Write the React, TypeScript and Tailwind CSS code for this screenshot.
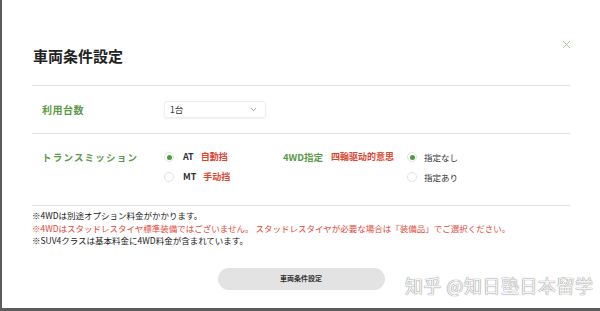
import { ChevronDown, X } from 'lucide-react';

const FONT = '"Noto Sans CJK JP", "Noto Sans", sans-serif';

function Radio({ checked }: { checked: boolean }) {
  return (
    <span className="w-[10px] h-[10px] rounded-full border border-[#e3e3e3] bg-white flex items-center justify-center shrink-0">
      {checked && <span className="w-[5px] h-[5px] rounded-full bg-[#4f9a42]" />}
    </span>
  );
}

export default function App() {
  return (
    <div
      className="relative w-[600px] h-[311px] bg-white border-l-2 border-[#5c5c5c] overflow-hidden flex flex-col"
      style={{ fontFamily: FONT }}
    >
      <div className="flex-1 px-[30px]">
        {/* header */}
        <div className="flex items-start justify-between pt-[46px] pb-[20px] border-b border-[#e2e2e2]">
          <h1 className="text-[15px] leading-[19px] font-bold text-[#222] pl-[1px]">車両条件設定</h1>
          <X className="w-[13px] h-[13px] text-[#8fb38b] -mt-[8px] -mr-[3px]" strokeWidth={1.4} />
        </div>

        {/* vehicle count */}
        <div className="flex items-center h-[48px] border-b border-[#e2e2e2] pl-[10px]">
          <span className="w-[122px] text-[10px] font-bold text-[#5b9a48] tracking-[0.5px]">利用台数</span>
          <div className="w-[102px] h-[17px] rounded-[3px] border border-[#efefef] shadow-[0_1px_2px_rgba(0,0,0,0.06)] flex items-center justify-between pl-[5px] pr-[7px]">
            <span className="text-[8.5px] text-[#333]">1台</span>
            <ChevronDown className="w-[9px] h-[9px] text-[#777]" strokeWidth={2} />
          </div>
        </div>

        {/* transmission / 4wd */}
        <div className="flex items-start h-[72px] border-b border-[#e2e2e2] pl-[10px] pt-[17px]">
          <span className="w-[122px] text-[9.5px] leading-[12px] font-bold text-[#5b9a48] tracking-[1.2px]">トランスミッション</span>
          <div className="w-[119px] flex flex-col gap-[8px]">
            <div className="flex items-center h-[12px]">
              <Radio checked />
              <span className="ml-[9px] text-[9px] font-bold text-[#333]">AT</span>
              <span className="ml-[7px] text-[9px] font-bold text-[#e0442e]">自動挡</span>
            </div>
            <div className="flex items-center h-[12px]">
              <Radio checked={false} />
              <span className="ml-[9px] text-[9px] font-bold text-[#333]">MT</span>
              <span className="ml-[7px] text-[9px] font-bold text-[#e0442e]">手动挡</span>
            </div>
          </div>
          <div className="flex items-center h-[12px] w-[124px]">
            <span className="text-[9.5px] font-bold text-[#5b9a48]">4WD指定</span>
            <span className="ml-[8px] text-[9px] font-bold text-[#e0442e]">四輪驱动的意思</span>
          </div>
          <div className="flex flex-col gap-[8px]">
            <div className="flex items-center h-[12px]">
              <Radio checked />
              <span className="ml-[7px] text-[8.5px] text-[#333]">指定なし</span>
            </div>
            <div className="flex items-center h-[12px]">
              <Radio checked={false} />
              <span className="ml-[7px] text-[8.5px] text-[#333]">指定あり</span>
            </div>
          </div>
        </div>

        {/* notes */}
        <div className="pt-[3px] text-[8.5px] leading-[12.5px]">
          <p className="text-[#222]">※4WDは別途オプション料金がかかります。</p>
          <p className="text-[#e2493a]">※4WDはスタッドレスタイヤ標準装備ではございません。 スタッドレスタイヤが必要な場合は「装備品」でご選択ください。</p>
          <p className="text-[#222]">※SUV4クラスは基本料金に4WD料金が含まれています。</p>
        </div>

        <div className="flex justify-center pt-[21px]">
          <button className="w-[167px] h-[22px] rounded-full bg-[#e3e3e3] text-[7px] font-bold text-[#333] flex items-center justify-center">
            車両条件設定
          </button>
        </div>
      </div>

      <div className="h-[3px] bg-[#5c5c5c]" />

      {/* watermark */}
      <span className="absolute left-[403px] top-[274px] text-[18px] leading-[22px] text-[#f5f5f5] tracking-[0.5px] [text-shadow:0_0_1px_#8a8a8a,0_0_1px_#8a8a8a]">
        知乎 @知日塾日本留学
      </span>
    </div>
  );
}
